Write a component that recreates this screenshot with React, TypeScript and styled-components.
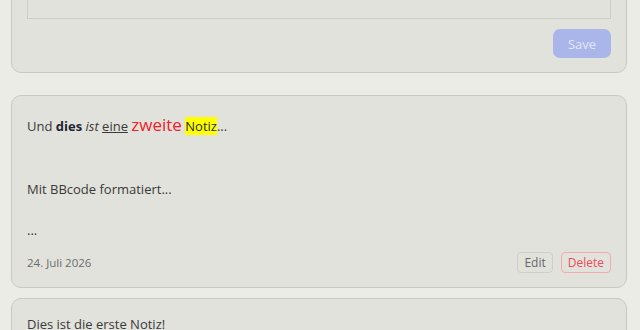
import React from 'react';
import styled, { createGlobalStyle } from 'styled-components';

const GlobalStyle = createGlobalStyle`
  html, body {
    margin: 0;
    padding: 0;
    background: #ecece7;
    font-family: 'Open Sans', 'Noto Sans', sans-serif;
    color: #3a3a3a;
    overflow: hidden;
  }
`;

const Page = styled.div`
  width: 640px;
  height: 330px;
  overflow: hidden;
`;

const Column = styled.div`
  margin: -58px 13px 0 11px;
  display: flex;
  flex-direction: column;
`;

const Card = styled.div`
  background: #e2e2dd;
  border: 1px solid #c9c9c4;
  border-radius: 10px;
  padding: 15px 15px 14px;
`;

const FormCard = styled(Card)`
  margin-bottom: 22px;
  display: flex;
  flex-direction: column;
`;

const TextArea = styled.div`
  height: 60px;
  border: 1px solid #cdcdc8;
  border-top: none;
  background: #e2e2dd;
`;

const FormFooter = styled.div`
  display: flex;
  justify-content: flex-end;
  margin-top: 10px;
`;

const SaveButton = styled.button`
  width: 58px;
  height: 29px;
  border: none;
  border-radius: 7px;
  background: #aab6e9;
  color: #e3e6f4;
  font-family: inherit;
  font-size: 13px;
`;

const NoteList = styled.div`
  display: flex;
  flex-direction: column;
  gap: 10px;
`;

const NoteBody = styled.div`
  font-size: 13px;
  line-height: 20.5px;
  white-space: pre-line;
  color: #3a3a3a;
`;

const Bold = styled.b`
  color: #1f2433;
`;

const Red = styled.span`
  color: #f0202a;
  font-size: 17px;
  line-height: 27px;
`;

const Mark = styled.span`
  background: #ffff00;
  color: #2a2a2a;
`;

const NoteFooter = styled.div`
  display: flex;
  align-items: center;
  justify-content: space-between;
  margin-top: 11px;
`;

const DateText = styled.span`
  font-size: 11.5px;
  color: #6c6c6c;
`;

const Actions = styled.div`
  display: flex;
  gap: 8px;
`;

const SmallButton = styled.button<{ $danger?: boolean }>`
  height: 21px;
  padding: 0 6px;
  border-radius: 4px;
  font-family: inherit;
  font-size: 12px;
  background: #e2e2dd;
  border: 1px solid ${({ $danger }) => ($danger ? '#f3a9ad' : '#cfcfca')};
  color: ${({ $danger }) => ($danger ? '#ef4b57' : '#666')};
`;

const App = () => {
  return (
    <Page>
      <GlobalStyle />
      <Column>
        <FormCard>
          <TextArea />
          <FormFooter>
            <SaveButton disabled>Save</SaveButton>
          </FormFooter>
        </FormCard>
        <NoteList>
          <Card>
            <NoteBody>
              Und <Bold>dies</Bold> <i>ist</i> <u>eine</u> <Red>zweite</Red>{' '}
              <Mark>Notiz</Mark>...{'\n\n\n'}Mit BBcode formatiert...{'\n\n'}...
            </NoteBody>
            <NoteFooter>
              <DateText>24. Juli 2026</DateText>
              <Actions>
                <SmallButton>Edit</SmallButton>
                <SmallButton $danger>Delete</SmallButton>
              </Actions>
            </NoteFooter>
          </Card>
          <Card>
            <NoteBody>Dies ist die erste Notiz!</NoteBody>
          </Card>
        </NoteList>
      </Column>
    </Page>
  );
};

export default App;
